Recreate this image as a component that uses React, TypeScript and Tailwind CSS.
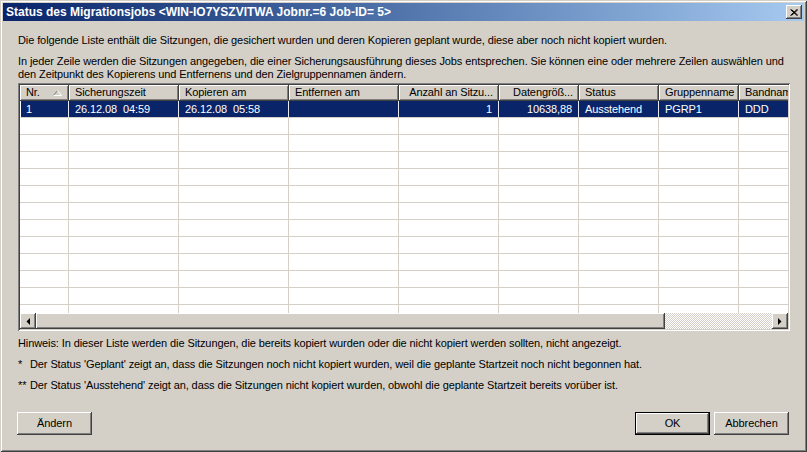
const raised =
  "bg-[#d4d0c8] shadow-[inset_-1px_-1px_0_#404040,inset_1px_1px_0_#ffffff,inset_-2px_-2px_0_#808080,inset_2px_2px_0_#d4d0c8]";

type Col = { label: string; width: number; right?: boolean };

const columns: Col[] = [
  { label: "Nr.", width: 49 },
  { label: "Sicherungszeit", width: 110 },
  { label: "Kopieren am", width: 110 },
  { label: "Entfernen am", width: 110 },
  { label: "Anzahl an Sitzu...", width: 100, right: true },
  { label: "Datengröß...", width: 80, right: true },
  { label: "Status", width: 80 },
  { label: "Gruppenname", width: 80 },
  { label: "Bandname", width: 80 },
];

const row = ["1", "26.12.08  04:59", "26.12.08  05:58", "", "1", "10638,88", "Ausstehend", "PGRP1", "DDD"];

function SortArrow() {
  return (
    <svg width="9" height="6" viewBox="0 0 9 6" className="absolute left-[33px] top-[5px]">
      <path d="M0.5 5.5 L4.5 0.5" stroke="#808080" fill="none" />
      <path d="M4.5 0.5 L8.5 5.5 M0.5 5.5 H8.5" stroke="#ffffff" fill="none" />
    </svg>
  );
}

function Header() {
  return (
    <div className="flex h-[16px] shrink-0">
      {columns.map((c, i) => (
        <div
          key={c.label}
          style={{ width: c.width }}
          className={`relative shrink-0 overflow-hidden whitespace-nowrap px-[6px] leading-[15px] ${raised} ${
            c.right ? "text-right" : ""
          }`}
        >
          {c.label}
          {i === 0 && <SortArrow />}
        </div>
      ))}
    </div>
  );
}

function Rows() {
  const empty = Array.from({ length: 12 });
  return (
    <div className="h-[212px] overflow-hidden bg-white">
      <div className="flex h-[17px]">
        {columns.map((c, i) => (
          <div
            key={c.label}
            style={{ width: c.width }}
            className={`shrink-0 overflow-hidden whitespace-pre border-b border-r border-b-[#d4d0c8] border-r-[#e8e8f0] bg-[#0a246a] px-[6px] leading-[16px] text-white ${
              c.right ? "text-right" : ""
            } ${i === 0 ? "border-l border-l-white pl-[5px]" : ""}`}
          >
            {row[i]}
          </div>
        ))}
      </div>
      {empty.map((_, r) => (
        <div key={r} className="flex h-[17px]">
          {columns.map((c) => (
            <div
              key={c.label}
              style={{ width: c.width }}
              className="shrink-0 border-b border-r border-[#d4d0c8]"
            />
          ))}
        </div>
      ))}
    </div>
  );
}

function ScrollArrow({ dir }: { dir: "left" | "right" }) {
  return (
    <div className={`flex h-[16px] w-[16px] shrink-0 items-center justify-center ${raised}`}>
      <svg width="4" height="7" viewBox="0 0 4 7">
        {dir === "left" ? <path d="M4 0 L0.5 3.5 L4 7 Z" fill="#000" /> : <path d="M0 0 L3.5 3.5 L0 7 Z" fill="#000" />}
      </svg>
    </div>
  );
}

function ScrollBar() {
  return (
    <div className="flex h-[16px] shrink-0">
      <ScrollArrow dir="left" />
      <div className={`h-[16px] w-[629px] shrink-0 ${raised}`} />
      <div className="h-[16px] flex-1 bg-[repeating-conic-gradient(#d4d0c8_0%_25%,#ffffff_0%_50%)] bg-[length:2px_2px]" />
      <ScrollArrow dir="right" />
    </div>
  );
}

function Button({ label, isDefault }: { label: string; isDefault?: boolean }) {
  return (
    <div className={`h-[23px] w-[75px] ${isDefault ? "border border-black" : ""}`}>
      <div className={`flex h-full w-full items-center justify-center ${raised}`}>{label}</div>
    </div>
  );
}

export default function App() {
  return (
    <div
      className="h-[452px] w-[807px] bg-[#d4d0c8] p-[3px] text-[11px] tracking-[-0.1px] text-black shadow-[inset_1px_1px_0_#d4d0c8,inset_-1px_-1px_0_#404040,inset_2px_2px_0_#ffffff,inset_-2px_-2px_0_#808080]"
      style={{ fontFamily: '"Liberation Sans", Arial, sans-serif' }}
    >
      {/* title bar */}
      <div className="flex h-[18px] items-center bg-gradient-to-r from-[#0a246a] to-[#a6caf0] pl-[3px] pr-[2px]">
        <span className="flex-1 text-[12px] font-bold leading-[18px] tracking-normal text-white">
          Status des Migrationsjobs &lt;WIN-IO7YSZVITWA Jobnr.=6 Job-ID= 5&gt;
        </span>
        <div className={`flex h-[14px] w-[16px] items-center justify-center ${raised}`}>
          <svg width="8" height="7" viewBox="0 0 8 7">
            <path d="M0.5 0.5 L7 6.5 M1.5 0.5 L8 6.5 M0.5 6.5 L7 0.5 M1.5 6.5 L8 0.5" stroke="#000" strokeWidth="1" />
          </svg>
        </div>
      </div>

      {/* content */}
      <div className="flex flex-col pl-[15px] pr-[14px]">
        <p className="pt-[13px] leading-[13px]">
          Die folgende Liste enthält die Sitzungen, die gesichert wurden und deren Kopieren geplant wurde, diese aber
          noch nicht kopiert wurden.
        </p>
        <p className="mt-[8px] leading-[13px]">
          In jeder Zeile werden die Sitzungen angegeben, die einer Sicherungsausführung dieses Jobs entsprechen. Sie
          können eine oder mehrere Zeilen auswählen und den Zeitpunkt des Kopierens und Entfernens und den
          Zielgruppennamen ändern.
        </p>

        {/* list view */}
        <div className="mt-[2px] flex h-[248px] flex-col bg-white p-[2px] shadow-[inset_1px_1px_0_#808080,inset_-1px_-1px_0_#ffffff,inset_2px_2px_0_#404040,inset_-2px_-2px_0_#d4d0c8]">
          <div className="flex flex-1 flex-col overflow-hidden">
            <Header />
            <Rows />
            <ScrollBar />
          </div>
        </div>

        <p className="mt-[6px] leading-[13px]">
          Hinweis: In dieser Liste werden die Sitzungen, die bereits kopiert wurden oder die nicht kopiert werden
          sollten, nicht angezeigt.
        </p>
        <p className="mt-[8px] flex leading-[13px]">
          <span className="w-[12px] shrink-0">*</span>
          Der Status 'Geplant' zeigt an, dass die Sitzungen noch nicht kopiert wurden, weil die geplante Startzeit noch
          nicht begonnen hat.
        </p>
        <p className="mt-[8px] flex leading-[13px]">
          <span className="w-[12px] shrink-0">**</span>
          Der Status 'Ausstehend' zeigt an, dass die Sitzungen nicht kopiert wurden, obwohl die geplante Startzeit
          bereits vorüber ist.
        </p>

        <div className="-ml-px mr-px mt-[20px] flex items-center">
          <Button label="Ändern" />
          <div className="flex-1" />
          <div className="flex gap-[4px]">
            <Button label="OK" isDefault />
            <Button label="Abbrechen" />
          </div>
        </div>
      </div>
    </div>
  );
}
